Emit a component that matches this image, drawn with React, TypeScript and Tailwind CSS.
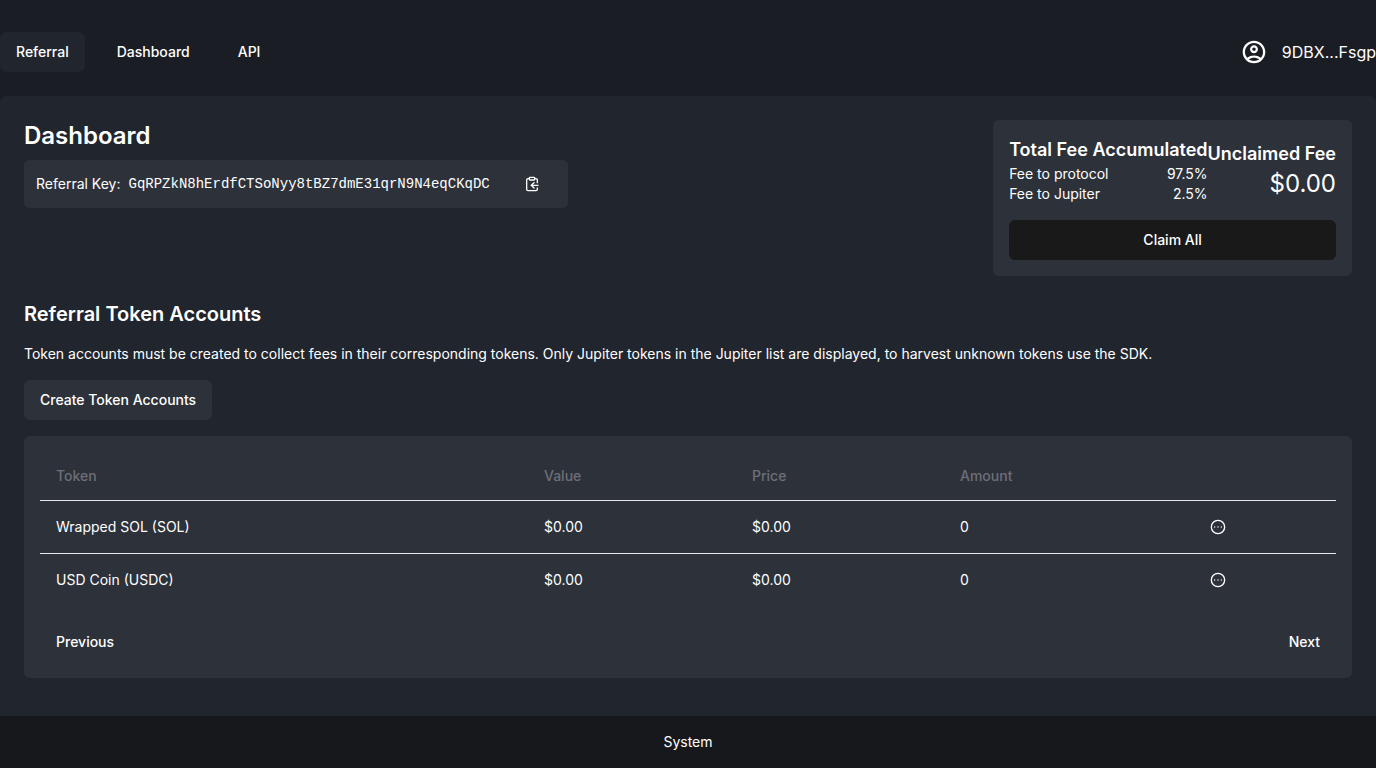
import { ClipboardCopy, CircleEllipsis } from "lucide-react";
import { MdOutlineAccountCircle } from "react-icons/md";

const navItems = [
  { label: "Referral", active: true },
  { label: "Dashboard", active: false },
  { label: "API", active: false },
];

const tokens = [
  { name: "Wrapped SOL (SOL)", value: "$0.00", price: "$0.00", amount: "0" },
  { name: "USD Coin (USDC)", value: "$0.00", price: "$0.00", amount: "0" },
];

const referralKey = "GqRPZkN8hErdfCTSoNyy8tBZ7dmE31qrN9N4eqCKqDC";

function Header() {
  return (
    <header className="flex items-center justify-between pt-8 pb-6">
      <nav className="flex gap-4">
        {navItems.map((item) => (
          <a
            key={item.label}
            href="#"
            className={
              item.active
                ? "rounded-md bg-[#21252d] px-4 py-2 text-sm leading-6 font-medium"
                : "rounded-md px-4 py-2 text-sm leading-6 font-medium"
            }
          >
            {item.label}
          </a>
        ))}
      </nav>
      <button type="button" className="flex items-center gap-4 text-base">
        <MdOutlineAccountCircle
          viewBox="1.4 1.4 21.2 21.2"
          className="size-6"
          aria-hidden="true"
        />
        <span>9DBX...Fsgp</span>
      </button>
    </header>
  );
}

function FeeCard() {
  return (
    <section className="rounded-md bg-[#2d313a] p-4">
      <div className="flex items-center justify-between">
        <div>
          <h2 className="text-lg font-semibold">Total Fee Accumulated</h2>
          <dl className="text-sm">
            <div className="flex justify-between">
              <dt>Fee to protocol</dt>
              <dd>97.5%</dd>
            </div>
            <div className="flex justify-between">
              <dt>Fee to Jupiter</dt>
              <dd>2.5%</dd>
            </div>
          </dl>
        </div>
        <div className="text-right">
          <h2 className="text-lg font-semibold">Unclaimed Fee</h2>
          <p className="text-2xl">$0.00</p>
        </div>
      </div>
      <button
        type="button"
        className="mt-4 h-10 w-full rounded-md bg-[#19191a] text-sm font-medium"
      >
        Claim All
      </button>
    </section>
  );
}

function TokenTable() {
  return (
    <section className="mt-4 rounded-md bg-[#2d313a] p-4">
      <table className="w-full table-fixed text-left text-sm">
        <thead>
          <tr className="h-12 border-b border-gray-200 text-[#6d6f77]">
            <th className="px-4 font-medium">Token</th>
            <th className="w-52 px-4 font-medium">Value</th>
            <th className="w-52 px-4 font-medium">Price</th>
            <th className="w-52 px-4 font-medium">Amount</th>
            <th className="w-46 px-4" aria-label="Actions" />
          </tr>
        </thead>
        <tbody>
          {tokens.map((token) => (
            <tr key={token.name} className="border-b border-gray-200 last:border-0">
              <td className="p-4">{token.name}</td>
              <td className="p-4">{token.value}</td>
              <td className="p-4">{token.price}</td>
              <td className="p-4">{token.amount}</td>
              <td className="p-4">
                <button
                  type="button"
                  aria-label={`Actions for ${token.name}`}
                  className="flex w-[100px] justify-center"
                >
                  <CircleEllipsis className="size-4" />
                </button>
              </td>
            </tr>
          ))}
        </tbody>
      </table>
      <div className="mt-4 flex justify-between">
        <button type="button" className="h-10 px-4 text-sm font-medium">
          Previous
        </button>
        <button type="button" className="h-10 px-4 text-sm font-medium">
          Next
        </button>
      </div>
    </section>
  );
}

export default function App() {
  return (
    <div className="flex min-h-screen flex-col bg-[#1b1d24] font-['Inter','Liberation_Sans',sans-serif] text-white">
      <Header />
      <main className="flex-1 rounded-t-md bg-[#21252d] p-6">
        <div className="flex items-start justify-between">
          <div>
            <h1 className="text-2xl font-semibold">Dashboard</h1>
            <div className="mt-2 flex w-[544px] items-center gap-2 rounded-md bg-[#2d313a] px-3 py-1 text-sm">
              <span>Referral Key:</span>
              <span className="flex-1 font-['Liberation_Mono',monospace]">{referralKey}</span>
              <button type="button" aria-label="Copy referral key" className="h-10 px-4">
                <ClipboardCopy className="size-4" />
              </button>
            </div>
          </div>
          <FeeCard />
        </div>
        <h2 className="mt-6 text-xl font-semibold">Referral Token Accounts</h2>
        <p className="mt-4 text-sm">
          Token accounts must be created to collect fees in their corresponding tokens. Only
          Jupiter tokens in the Jupiter list are displayed, to harvest unknown tokens use the SDK.
        </p>
        <button
          type="button"
          className="mt-4 h-10 rounded-md bg-[#2d313a] px-4 text-sm font-medium"
        >
          Create Token Accounts
        </button>
        <TokenTable />
      </main>
      <footer className="flex justify-center bg-[#17181c] p-4 text-sm">System</footer>
    </div>
  );
}
